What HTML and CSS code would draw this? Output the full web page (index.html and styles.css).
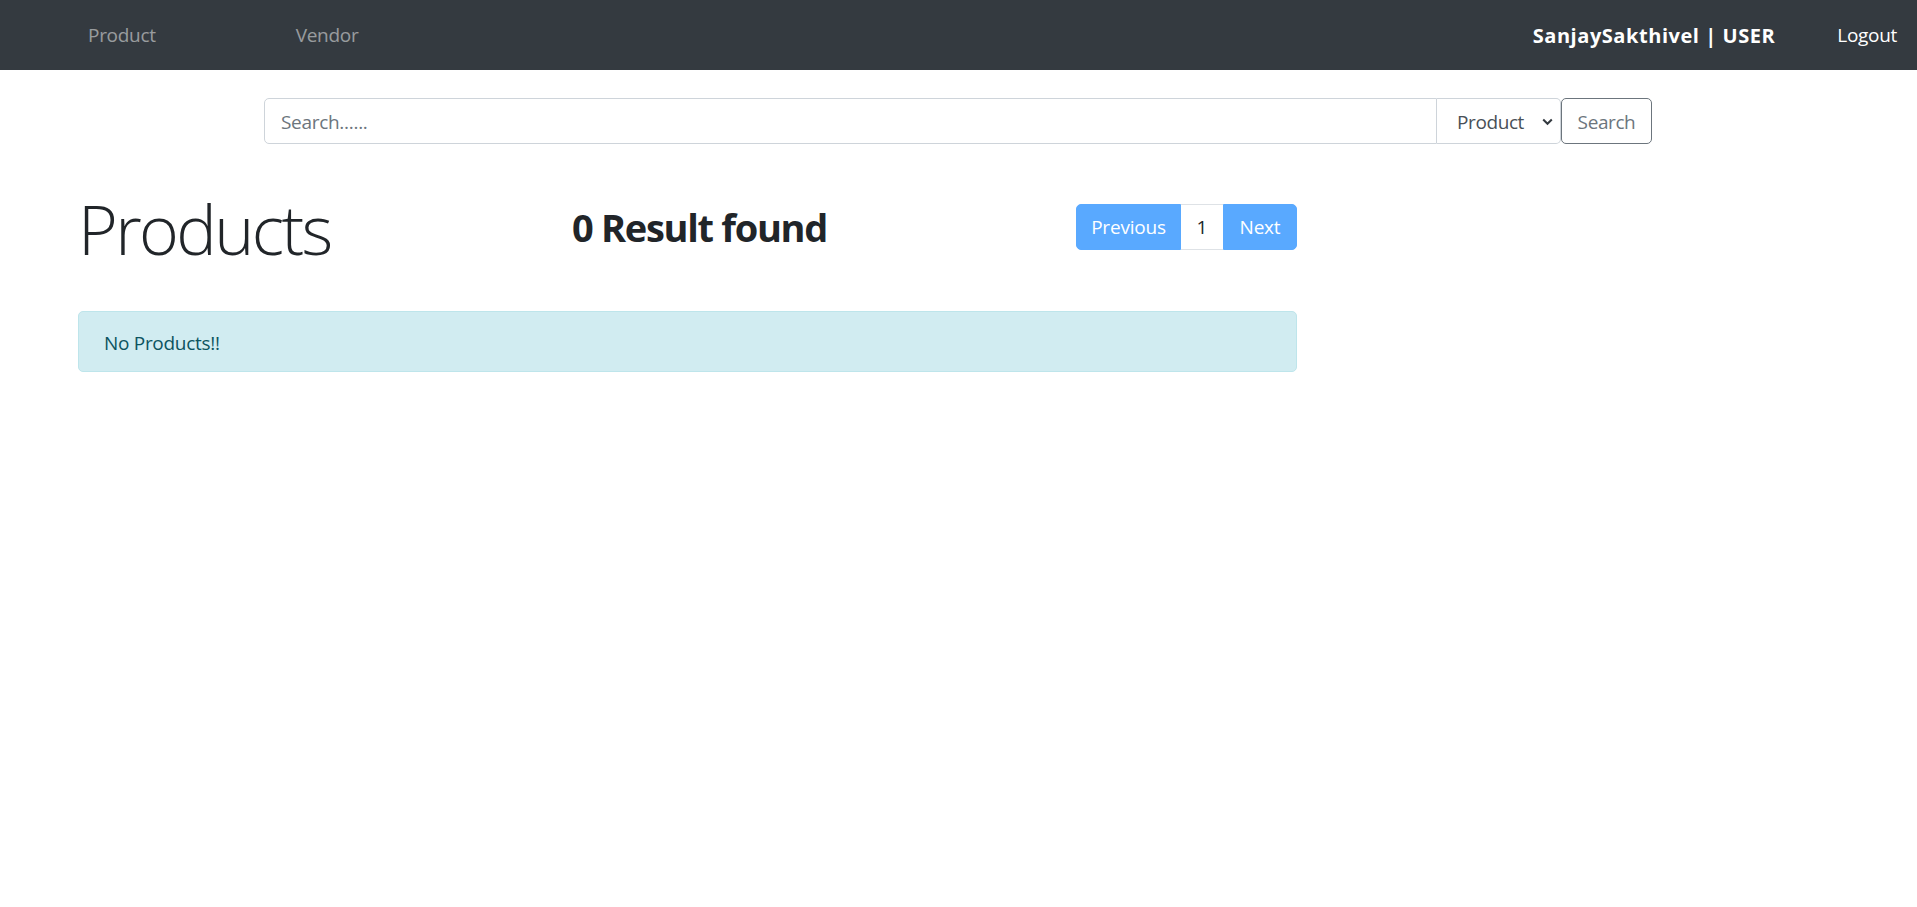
FILE: index.html
```html
<!DOCTYPE html>
<html lang="en">
<head>
<meta charset="utf-8">
<title>Products</title>
<link rel="stylesheet" href="styles.css">
</head>
<body>
<nav class="navbar">
  <div class="nav-left">
    <a class="nav-link nav-product" href="#">Product</a>
    <a class="nav-link nav-vendor" href="#">Vendor</a>
  </div>
  <div class="nav-right">
    <span class="brand">SanjaySakthivel | USER</span>
    <a class="logout" href="#">Logout</a>
  </div>
</nav>

<div class="search-wrap">
  <div class="search-group">
    <div class="search-input">Search......</div>
    <div class="search-select">
      <span>Product</span>
      <svg class="chev" width="11" height="8" viewBox="0 0 11 8"><path d="M1.2 1.5 L5.5 5.8 L9.8 1.5" fill="none" stroke="#343a40" stroke-width="2"/></svg>
    </div>
    <div class="search-btn">Search</div>
  </div>
</div>

<main class="content">
  <div class="header-row">
    <h1 class="title">Products</h1>
    <h2 class="result">0 Result found</h2>
    <div class="pagination">
      <span class="page-btn prev">Previous</span>
      <span class="page-num">1</span>
      <span class="page-btn next">Next</span>
    </div>
  </div>
  <div class="alert">No Products!!</div>
</main>
</body>
</html>
```

FILE: styles.css
```css
* { box-sizing: border-box; }
html, body { margin: 0; padding: 0; }
body {
  font-family: "Open Sans", "Noto Sans", sans-serif;
  font-size: 20px;
  color: #212529;
  background: #fff;
}
a { text-decoration: none; }

.navbar {
  height: 70px;
  background: #343a40;
  display: flex;
  align-items: center;
  justify-content: space-between;
}
.nav-left { display: flex; align-items: center; padding-left: 78px; }
.nav-link {
  color: rgba(255,255,255,0.5);
  font-size: 19px;
  padding: 0 10px;
  letter-spacing: -0.3px;
}
.nav-vendor { margin-left: 120px; }
.nav-right { display: flex; align-items: center; padding-right: 20px; }
.brand {
  color: #fff;
  font-weight: 700;
  font-size: 20px;
  letter-spacing: 0.55px;
}
.logout {
  color: #fff;
  font-size: 19px;
  margin-left: 62px;
  letter-spacing: -0.3px;
}

.search-wrap {
  padding-top: 28px;
  padding-left: 264px;
}
.search-group { display: flex; height: 46px; }
.search-input {
  width: 1173px;
  border: 1px solid #ced4da;
  border-radius: 5px 0 0 5px;
  color: #6c757d;
  padding: 2px 16px 0;
  display: flex;
  align-items: center;
  font-size: 19px;
  letter-spacing: -0.3px;
}
.search-select {
  width: 124px;
  border: 1px solid #ced4da;
  border-left: none;
  border-radius: 0 5px 5px 0;
  display: flex;
  align-items: center;
  justify-content: space-between;
  padding: 2px 7px 0 20px;
  color: #495057;
  font-size: 19px;
  letter-spacing: -0.4px;
}
.chev { display: block; }
.search-btn {
  width: 91px;
  border: 1px solid #6c757d;
  border-radius: 5px;
  color: #6c757d;
  display: flex;
  align-items: center;
  justify-content: center;
  padding-top: 2px;
  font-size: 19px;
  letter-spacing: -0.4px;
}

.content {
  margin-left: 78px;
  width: 1219px;
  padding-top: 22px;
}
.header-row {
  display: grid;
  grid-template-columns: 494px 1fr auto;
  align-items: center;
  height: 120px;
}
.title {
  margin: 0;
  font-size: 68px;
  font-weight: 300;
  line-height: 84px;
  letter-spacing: -2.6px;
  padding-top: 6px;
}
.result {
  margin: 0;
  font-size: 38px;
  font-weight: 700;
  line-height: 48px;
  letter-spacing: -1.3px;
  padding-top: 2px;
}
.pagination {
  display: flex;
  height: 46px;
  align-self: start;
  margin-top: 38px;
}
.page-btn {
  background: #59a9ff;
  color: #fff;
  border: 1px solid #59a9ff;
  display: flex;
  align-items: center;
  justify-content: center;
  font-size: 19px;
  letter-spacing: -0.2px;
}
.prev { width: 105px; border-radius: 5px 0 0 5px; }
.next { width: 74px; border-radius: 0 5px 5px 0; }
.page-num {
  width: 42px;
  border: 1px solid #dee2e6;
  border-left: none;
  border-right: none;
  display: flex;
  align-items: center;
  justify-content: center;
  color: #212529;
  font-size: 19px;
}

.alert {
  margin-top: 25px;
  height: 61px;
  background: #d1ecf1;
  border: 1px solid #bee5eb;
  border-radius: 5px;
  color: #0c5460;
  padding: 2px 25px 0;
  display: flex;
  align-items: center;
  font-size: 19px;
  letter-spacing: -0.3px;
}
```
